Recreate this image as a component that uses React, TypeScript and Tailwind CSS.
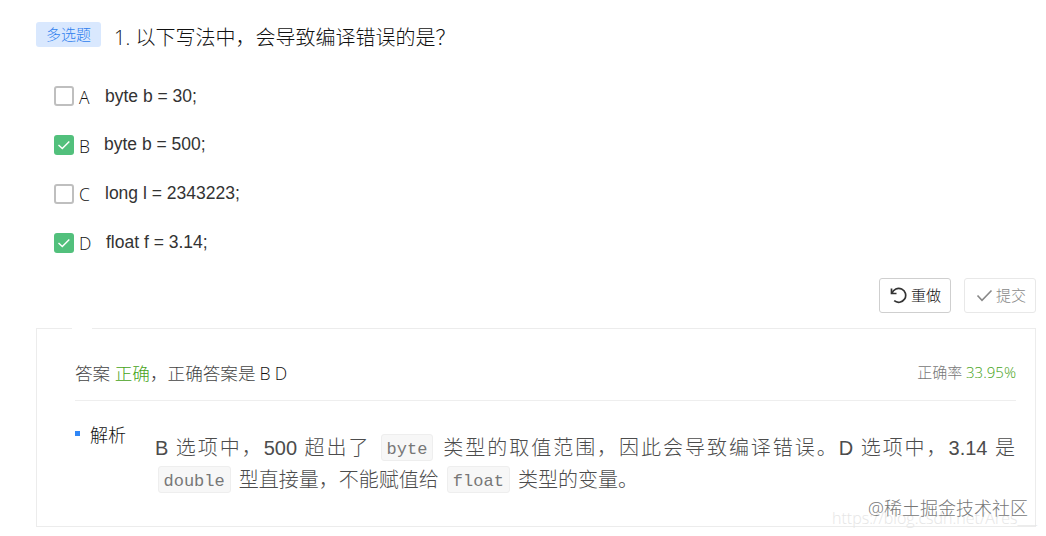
import clsx from "clsx";

const options = [
  { label: "A", text: "byte b = 30;", checked: false, offset: "ml-px mt-0" },
  { label: "B", text: "byte b = 500;", checked: true, offset: "ml-0 -mt-[2px]" },
  { label: "C", text: "long l = 2343223;", checked: false, offset: "ml-px -mt-[2px]" },
  { label: "D", text: "float f = 3.14;", checked: true, offset: "ml-[2px] -mt-[2px]" },
];

function Checkbox({ checked }: { checked: boolean }) {
  return (
    <span
      className={clsx(
        "flex h-5 w-5 shrink-0 items-center justify-center rounded-[3px]",
        checked ? "bg-[#52c07c]" : "border-2 border-[#bfbfbf] bg-white"
      )}
    >
      {checked && (
        <svg width="14" height="12" viewBox="0 0 14 12" fill="none" stroke="#fff" strokeWidth="1.4">
          <path d="M1.5 6 5.3 9.6 12.3 2.4" />
        </svg>
      )}
    </span>
  );
}

function Code({ children }: { children: string }) {
  return (
    <code className="mx-[2.5px] inline-block h-[27px] rounded-[3px] border border-[#eeeeee] bg-[#f7f7f7] px-[5px] align-[1px] font-['Liberation_Mono',monospace] text-[17px] leading-[30px] text-[#777]">
      {children}
    </code>
  );
}

export default function App() {
  return (
    <div className="relative h-[536px] w-[1046px] overflow-hidden bg-white font-['Open_Sans','Noto_Sans_CJK_SC',sans-serif] font-light text-[#111]">
      <header className="flex h-[54px] items-start pl-9 pt-[22px]">
        <span className="flex h-[25px] w-[65px] items-center justify-center rounded-[3px] bg-[#d9e8fe] text-[15px] text-[#2f7fee]">
          多选题
        </span>
        <h1 className="ml-[13px] mt-px whitespace-nowrap text-[20px] leading-[30px]">
          1. 以下写法中，会导致编译错误的是？
        </h1>
      </header>

      <ul className="flex flex-col pl-[54px] pt-[18px]">
        {options.map((o) => (
          <li key={o.label} className="flex h-[48.8px] items-center">
            <Checkbox checked={o.checked} />
            <span className="ml-[5px] mt-px w-[25px] text-[17.5px] leading-6">{o.label}</span>
            <span
              className={clsx(
                "whitespace-nowrap font-['Liberation_Sans',sans-serif] text-[17.5px] font-normal leading-6 text-[#333]",
                o.offset
              )}
            >
              {o.text}
            </span>
          </li>
        ))}
      </ul>

      <div className="mt-[11px] flex justify-end gap-[13px] pr-[10px]">
        <button className="flex h-[35px] w-[72px] items-center justify-center gap-[3px] rounded-[3px] border border-[#cfcfcf] pl-px text-[15px]">
          <svg width="18" height="18" viewBox="0 0 18 18" fill="none" stroke="#333" strokeWidth="1.7">
            <path d="M1.5 1.5v5h5" />
            <path d="M2 6.2A7 7 0 1 1 4.2 13.7" />
          </svg>
          重做
        </button>
        <button className="flex h-[35px] w-[72px] items-center justify-center gap-[3px] rounded-[3px] border border-[#e8e8e8] pl-[2px] text-[15px] text-[#888]">
          <svg width="17" height="14" viewBox="0 0 17 14" fill="none" stroke="currentColor" strokeWidth="1.6">
            <path d="M1.5 6.5 6 11.3 15.5 1.5" />
          </svg>
          提交
        </button>
      </div>

      <section className="relative ml-9 mt-[15px] h-[199px] w-[1000px] border border-[#ececec] pl-[38px] pr-[19px]">
        <span className="absolute -top-px left-[35px] h-px w-5 bg-white" />
        <div className="flex h-[72px] justify-between border-b border-[#eeeeee] pt-[30px]">
          <p className="text-[17.6px] leading-7 text-[#444]">
            答案 <span className="text-[#46a318]">正确</span>，正确答案是
            <span className="ml-1 tracking-[-0.2px] text-[#111]">B D</span>
          </p>
          <p className="text-[15px] leading-[26px] text-[#777]">
            正确率 <span className="text-[#46a318]">33.95%</span>
          </p>
        </div>
        <div className="flex">
          <h2 className="flex w-20 shrink-0 pt-5 text-[18px] leading-7">
            <span className="mr-[10px] mt-[10px] h-[5px] w-[5px] bg-[#2f86f6]" />
            解析
          </h2>
          <p className="w-[860px] pt-[31px] text-justify font-['Liberation_Sans','Noto_Sans_CJK_SC',sans-serif] text-[20px] leading-[32px] text-[#4c4c4c]">
            B 选项中，500 超出了 <Code>byte</Code> 类型的取值范围，因此会导致编译错误。D 选项中，3.14 是 <Code>double</Code> 型直接量，不能赋值给 <Code>float</Code> 类型的变量。
          </p>
        </div>
      </section>

      <span className="absolute left-[832px] top-[508px] whitespace-nowrap text-[16px] leading-5 text-[#e6e6e6]">
        https://blog.csdn.net/Ares___
      </span>
      <span className="absolute left-[868px] top-[496px] whitespace-nowrap text-[18px] leading-6 text-[#777]">
        @稀土掘金技术社区
      </span>
    </div>
  );
}
